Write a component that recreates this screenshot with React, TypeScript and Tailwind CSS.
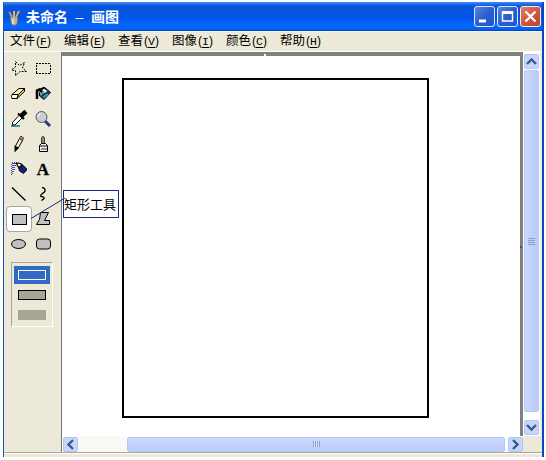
import type { ReactNode } from 'react';

const menus = [
  ['文件', 'F'],
  ['编辑', 'E'],
  ['查看', 'V'],
  ['图像', 'I'],
  ['颜色', 'C'],
  ['帮助', 'H'],
];

function Icon({ children }: { children?: ReactNode }) {
  return (
    <svg width="24" height="24" viewBox="0 0 24 24" fill="none" stroke="#000" className="block">
      {children}
    </svg>
  );
}

const tools: { name: string; art: ReactNode }[] = [
  { name: 'free-select', art: <path strokeDasharray="2 1.200" d="M8.500 4.500L12.500 8.500L17.500 5.500L15.500 11L19.500 14.500H13L8.500 18.500V13.500L4.500 13L8.500 10Z" /> },
  { name: 'select', art: <rect x="5" y="6.500" width="14" height="10" strokeDasharray="2 1" shapeRendering="crispEdges" /> },
  {
    name: 'eraser',
    art: (
      <>
        <path fill="#f8efae" d="M5 12.500L12 6.500H17.500L11.500 12.500Z" />
        <path fill="#fff9dc" d="M5 12.500H11.500L10 16.500H5L4.500 14.500Z" />
        <path fill="#d8cd8e" d="M11.500 12.500L17.500 6.500V9.500L10 16.500Z" />
      </>
    ),
  },
  {
    name: 'fill',
    art: (
      <>
        <path fill="#d9e4e8" d="M8.500 10.500L13.500 5.500L19.500 10.500L13 17.500L8.500 14Z" />
        <path fill="#17384e" stroke="none" d="M10 12L15 10.500L17 7.500L20 10.500L13 17.500L9 14Z" />
        <path stroke="#4b99a8" strokeWidth="2" d="M9.500 13L12.500 9.500M12 15.500L17 12" />
        <path strokeWidth="2.500" d="M6 17V8.500L8.500 7.500L11 10" />
        <path strokeWidth="1.500" d="M8.500 7.500L13 5.500L16 8" />
      </>
    ),
  },
  {
    name: 'picker',
    art: (
      <>
        <path stroke="#3d9ba0" strokeWidth="2" d="M4 19H13M5 17H8" />
        <path fill="#fff" d="M12 8.500L5.500 15.500V18H8L15 11" />
        <path strokeWidth="4.500" d="M14 9L19 4.500" />
        <path strokeWidth="2" d="M11 6.500L17 12" />
      </>
    ),
  },
  {
    name: 'magnifier',
    art: (
      <>
        <path stroke="#26348d" strokeWidth="3" d="M14 14L19 19" />
        <circle cx="10.500" cy="10" r="5.500" fill="#c9cdd0" stroke="#555b65" />
        <path stroke="#fff" d="M7.500 10V8.500L9.500 6.500" />
      </>
    ),
  },
  {
    name: 'pencil',
    art: (
      <>
        <path fill="#f8f2cb" d="M8.500 18V14L12.500 6.500L15.500 8.500L11.500 15.500Z" />
        <path stroke="#5e2a20" fill="#c98b68" d="M12.500 6.500L13.500 4.500H15L16.500 6L15.500 8.500Z" />
        <path strokeWidth="2" d="M8.500 18V15L10.500 16Z" />
      </>
    ),
  },
  {
    name: 'brush',
    art: (
      <>
        <path fill="#8a8874" stroke="#45443d" d="M10.500 11.500V6Q12 2.500 13.500 6V11.500" />
        <path fill="#f4f2e8" d="M10.500 11.500H14.500L16.500 13.500V19.500H8.500V13.500ZM8.500 14H16.500" />
        <path strokeWidth="0.800" d="M11 16V18M13 16V18M15 16V18" />
      </>
    ),
  },
  {
    name: 'airbrush',
    art: (
      <>
        <path stroke="#3b52aa" strokeDasharray="1 1" d="M4.500 7V19M5.500 6V18M6.500 6V15M7.500 6V13M8.500 6V10M5 5.500H10" />
        <path fill="#14206e" stroke="#09123d" d="M11.500 10.500L15 7.500L19.500 11.500V13.500L16.500 16.500L12.500 14Z" />
        <path fill="#f1f1e8" strokeWidth="1.200" d="M9.500 6L13.500 6.500L15 8L12 10.500L10.500 9Z" />
      </>
    ),
  },
  { name: 'text', art: <text x="12" y="17.500" textAnchor="middle" fill="#000" strokeWidth="0.300" fontFamily="Liberation Serif, serif" fontWeight="bold" fontSize="17">A</text> },
  { name: 'line', art: <path strokeWidth="1.400" d="M5 5.500L18.500 18.500" /> },
  { name: 'curve', art: <path strokeWidth="1.400" d="M11 5.500Q14.500 6 14 9Q13.500 10.500 11.500 11.500Q9 13.500 10 14.500Q13.500 14.500 13 16.500L10.500 18.500" /> },
  { name: 'rectangle', art: <rect x="5.500" y="7.500" width="14" height="10" fill="#c0c0c0" /> },
  { name: 'polygon', art: <path fill="#c0c0c0" d="M9.500 5.500H17.500L13.500 13.500H18.500V17.500H5.500L8.500 12.500Z" /> },
  { name: 'ellipse', art: <ellipse cx="11.500" cy="12" rx="7" ry="4.500" fill="#c0c0c0" /> },
  { name: 'rounded', art: <rect x="5.500" y="7" width="14" height="10" rx="3" fill="#c0c0c0" /> },
];

function ScrollButton({ d }: { d: string }) {
  return (
    <div className="flex h-[15px] w-[15px] shrink-0 items-center justify-center rounded-[2px] border border-[#b3c5f1] bg-[#c7d6fc]">
      <svg width="11" height="11" viewBox="0 0 11 11" fill="none" stroke="#3d588b" strokeWidth="2.400">
        <path d={d} />
      </svg>
    </div>
  );
}

function TitleButton({ close, children }: { close?: boolean; children: ReactNode }) {
  return (
    <div className={close
      ? 'h-[21px] w-[21px] rounded-[3px] border border-[#f4ece8] bg-linear-to-br from-[#dd7c64] via-[#d15a40] to-[#b9432c]'
      : 'h-[21px] w-[21px] rounded-[3px] border border-[#dfe8f8] bg-linear-to-br from-[#5584dc] via-[#2b5fd0] to-[#1b56cf]'}>
      <svg width="19" height="19" viewBox="0 0 19 19" fill="none" stroke="#fff">{children}</svg>
    </div>
  );
}

export default function App() {
  return (
    <div className="h-[460px] w-[546px] overflow-hidden bg-white pt-[2px] pl-[3px] font-['Liberation_Sans','Noto_Sans_CJK_SC',sans-serif] text-black">
      <div className="flex h-[455px] w-[541px] flex-col border-r-2 border-l border-r-[#0846c8] border-l-[#1b55b2] bg-[#ece9d8]">
        <header className="flex h-[29px] shrink-0 items-center bg-[linear-gradient(#3f8cf3_0px,#0a55df_4px,#0054e3_16px,#0566ff_22px,#0564f8_27px,#0040bd_29px)] pl-[2px]">
          <svg width="16" height="20" viewBox="0 0 16 20" fill="none" className="shrink-0">
            <path fill="#b9b6a0" stroke="#65716f" d="M4 10.500H12L11 17.500Q8 19.500 5.500 17.500Z" />
            <path stroke="#c9b89a" strokeWidth="2" d="M3 5L6 11M8 4V11M13 4L10 11" />
            <path stroke="#574f4c" d="M2 4L5 11M9.500 3V9M14 5L11 11" />
            <path stroke="#efecdc" strokeWidth="1.500" d="M7 12V17" />
          </svg>
          <h1 className="ml-[4px] flex w-[200px] items-center text-[14px] leading-[20px] font-bold text-white">
            <span>未命名</span>
            <span className="w-[23px] text-center font-['Liberation_Sans',sans-serif] font-normal">–</span>
            <span>画图</span>
          </h1>
          <div className="ml-auto flex gap-[2px] pr-px">
            <TitleButton><path strokeWidth="3" d="M4 14H11" /></TitleButton>
            <TitleButton><path strokeWidth="1.400" d="M4.500 4V14H14.500V4" /><path strokeWidth="3" d="M4 5.500H15" /></TitleButton>
            <TitleButton close><path strokeWidth="2.300" d="M4.500 4.500L14.500 14.500M14.500 4.500L4.500 14.500" /></TitleButton>
          </div>
        </header>

        <nav className="flex h-[20px] shrink-0 items-center border-t border-[#f7f4e6] pl-[6px]">
          {menus.map(([label, key]) => (
            <div key={key} className="flex w-[54px] items-center text-[12.500px] leading-[17px]">
              <span>{label}</span>
              <span className="ml-px flex font-['Liberation_Sans',sans-serif] text-[12px]">
                <span className="w-[4px]">(</span>
                <span className="flex h-[15px] w-[7px] justify-center border-b border-black font-['Liberation_Mono',monospace] text-[11.500px]">{key}</span>
                <span className="w-[4px]">)</span>
              </span>
            </div>
          ))}
        </nav>

        <main className="flex h-[402px] shrink-0 border-t border-b border-t-white border-b-[#aaa79a]">
          <aside className="relative w-[57px] shrink-0 pt-[5px] pl-[3px]">
            <div className="grid grid-cols-[24px_24px] gap-y-px">
              {tools.map((tool) => (
                <div key={tool.name} className={tool.name === 'rectangle' ? 'relative h-[24px] rounded-[3px] bg-white outline outline-[#aaa79c]' : 'relative h-[24px]'}>
                  <Icon>{tool.art}</Icon>
                </div>
              ))}
            </div>
            <div className="mt-[6px] ml-[4px] flex h-[65px] w-[42px] flex-col items-center border border-t-[#aaa79a] border-r-white border-b-white border-l-[#aaa79a] pt-[3px]">
              <div className="flex h-[18px] w-[36px] items-center justify-center bg-[#316ac5]"><div className="h-[10px] w-[28px] border border-white" /></div>
              <div className="mt-[6px] h-[10px] w-[28px] border border-black bg-[#a7a696]" />
              <div className="mt-[10px] h-[10px] w-[28px] bg-[#a7a696]" />
            </div>
            <div className="absolute top-[138px] left-[59px] z-10 h-[28px] w-[56px] border border-[#172887] bg-white pt-[5px] text-[13px] leading-[18px] whitespace-nowrap">矩形工具</div>
            <svg className="absolute top-[143px] left-[27px] z-20" width="36" height="26" viewBox="0 0 36 26" fill="none" stroke="#172887">
              <path d="M0 23.500L34 3" />
            </svg>
          </aside>

          <section className="flex min-w-0 grow flex-col border-l border-[#77766d]">
            <div className="flex h-[384px] shrink-0">
              <div className="relative w-[461px] shrink-0 border-t-[4px] border-r-[3px] border-[#81817b] bg-white">
                <div className="absolute -top-[2px] left-[202px] h-[2px] w-[2px] bg-white" />
                <div className="absolute top-[190px] -right-[2px] h-[2px] w-[2px] bg-[#315a99]" />
                <div className="mt-[22px] ml-[60px] h-[340px] w-[307px] border-2 border-black bg-white" />
              </div>
              <div className="flex w-[17px] flex-col items-center bg-white pt-[2px]">
                <ScrollButton d="M1 8L5.500 3.500L10 8" />
                <div className="mt-px flex h-[342px] w-[15px] flex-col items-center rounded-[2px] border border-[#b5c8f5] bg-linear-to-r from-[#cbd8fe] to-[#bacbf7] pt-[167px]">
                  <div className="h-px w-[7px] bg-[#899fca] shadow-[0_2px_0_#899fca,0_4px_0_#899fca,0_6px_0_#899fca]" />
                </div>
                <div className="mt-auto mb-px"><ScrollButton d="M1 3L5.500 7.500L10 3" /></div>
              </div>
            </div>
            <div className="flex h-[16px] w-[461px] items-center bg-white pl-px">
              <ScrollButton d="M8 1L3.500 5.500L8 10" />
              <div className="h-full w-[49px] bg-[#faf9f3]" />
              <div className="flex h-[15px] w-[378px] items-center justify-center rounded-[2px] border border-[#b5c8f5] bg-linear-to-b from-[#cbd8fe] to-[#bacbf7]">
                <div className="h-[6px] w-[7px] bg-[repeating-linear-gradient(to_right,#899fca_0px,#899fca_1px,#d9e5ff_1px,#d9e5ff_2px)]" />
              </div>
              <div className="ml-auto"><ScrollButton d="M3 1L7.500 5.500L3 10" /></div>
            </div>
          </section>
        </main>
        <div className="h-px shrink-0 bg-white" />
      </div>
    </div>
  );
}
